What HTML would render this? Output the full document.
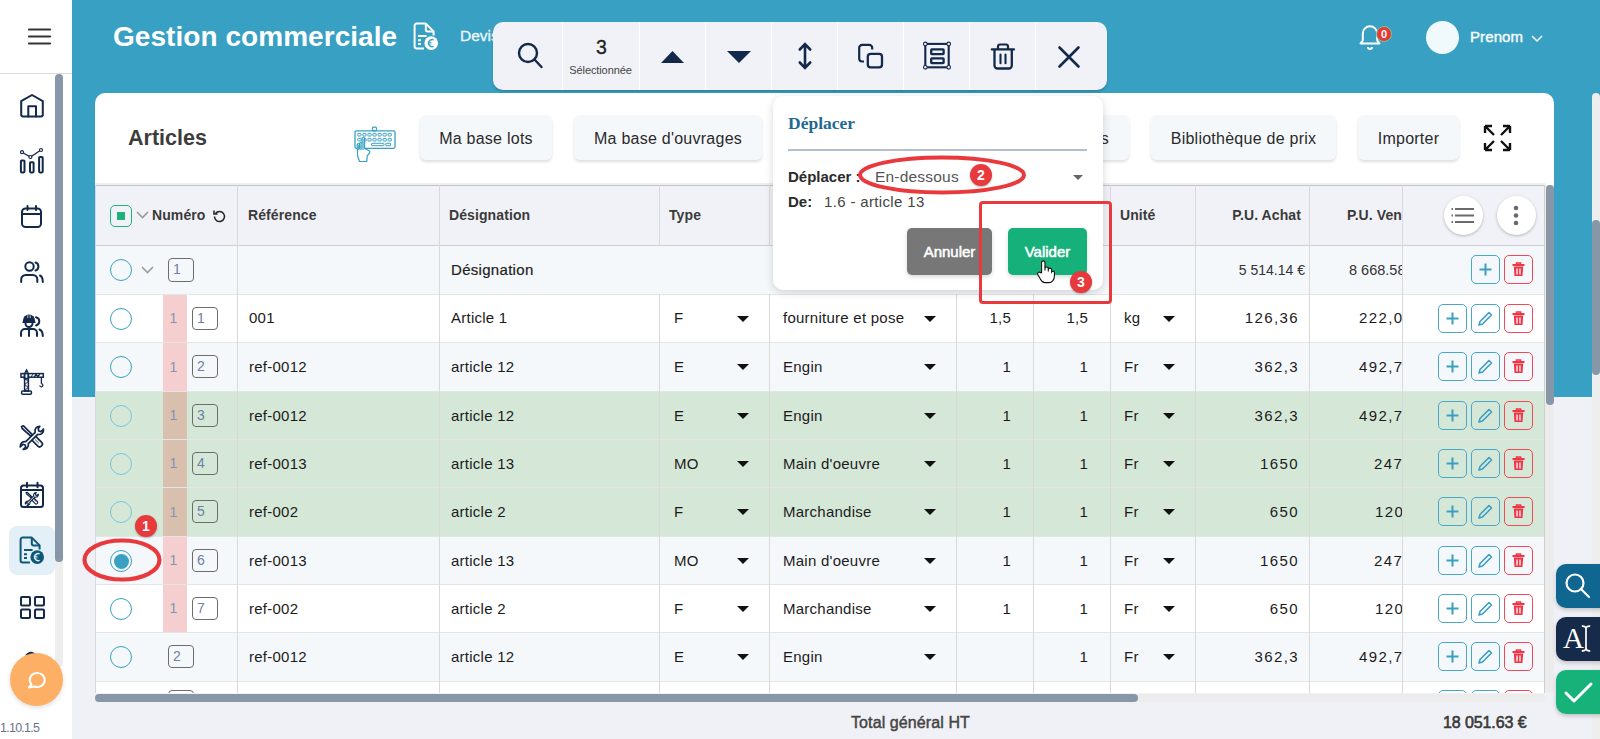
<!DOCTYPE html><html><head><meta charset="utf-8"><title>Gestion commerciale</title><style>
*{box-sizing:border-box;margin:0;padding:0}
html,body{width:1600px;height:739px;overflow:hidden}
body{position:relative;background:#f0f1f6;font-family:"Liberation Sans",sans-serif;color:#1f1f1f}
.a{position:absolute}
svg{display:block;overflow:visible}
.side{left:0;top:0;width:72px;height:739px;background:#fff}
.hdr{left:72px;top:0;width:1528px;height:397px;background:#38a0c2}
.card{left:95px;top:93px;width:1459px;height:646px;background:#fff;border-radius:10px 10px 0 0}
.btn{height:45px;top:115px;background:#f5f8fb;border-radius:6px;box-shadow:0 2px 3px rgba(0,0,0,.13);font-size:16px;color:#2a2a2a;text-align:center;line-height:48px;letter-spacing:.25px}
.th{font-weight:bold;font-size:14px;color:#3a3a3a;top:207px;letter-spacing:.1px;white-space:nowrap}
.vl{width:1px;background:#d9d9d9}
.hl{height:1px;background:#e5e5e5}
.cell{font-size:15px;color:#1b1b1b;letter-spacing:.25px;white-space:nowrap}
.num{letter-spacing:1.4px}
.car{width:0;height:0;border-left:6px solid transparent;border-right:6px solid transparent;border-top:6px solid #111}
.radio{width:22px;height:22px;border-radius:50%;border:1.5px solid #3aa0c2}
.nbox{width:26px;height:23px;border:1.5px solid #6c6c6c;border-radius:4px;font-size:14px;color:#6f80a3;line-height:20px;padding-left:4px}
.bar{width:24px;background:#f5cfcf;font-size:14px;color:#8593b0;text-align:center;padding-right:3px}
.ib{width:29px;height:29px;border:1.5px solid #4aa7c7;border-radius:5px}
.ib.r{border-color:#f04a5a}
.tb{top:22px;height:68px;border-left:1px solid #fff}
</style></head><body><div class="a hdr"></div>
<div class="a" style="left:1592px;top:93px;width:8px;height:646px;background:#eeeeee;border-radius:4px 4px 0 0"></div>
<div class="a" style="left:1592px;top:220px;width:8px;height:155px;background:#8797a8;border-radius:4px"></div>
<div class="a side"></div>
<div class="a" style="left:0;top:73px;width:72px;height:1px;background:#dcdcdc"></div>
<svg class="a" style="left:28px;top:28px" width="23" height="17" viewBox="0 0 23 17" ><path d="M1 1.5H22M1 8.5H22M1 15.5H22" stroke="#333" stroke-width="2.2" stroke-linecap="round"/></svg>
<div class="a" style="left:55px;top:74px;width:8px;height:593px;background:#eeeeee;border-radius:4px"></div>
<div class="a" style="left:55px;top:74px;width:8px;height:488px;background:#8797a8;border-radius:4px"></div>
<div class="a" style="left:9px;top:526px;width:46px;height:49px;background:#e3f0f8;border-radius:8px"></div>
<svg class="a" style="left:20px;top:94px" width="24" height="24" viewBox="0 0 24 24" ><path d="M1.2 7.2L12 1L22.8 7.2V20.5a2 2 0 0 1-2 2H3.2a2 2 0 0 1-2-2Z" fill="none" stroke="#13294b" stroke-width="2" stroke-linecap="round" stroke-linejoin="round" stroke-width="2.2"/><path d="M8.3 22.5V12.2H16V22.5" fill="none" stroke="#13294b" stroke-width="2" stroke-linecap="round" stroke-linejoin="round" stroke-width="2.2" stroke-linejoin="miter"/></svg>
<svg class="a" style="left:20px;top:148px" width="24" height="26" viewBox="0 0 24 26" ><rect x="0.9" y="12.4" width="3.6" height="12" rx="0.8" fill="none" stroke="#13294b" stroke-width="2" stroke-linecap="round" stroke-linejoin="round" stroke-width="1.8"/><rect x="10" y="14.2" width="3.6" height="10.2" rx="0.8" fill="none" stroke="#13294b" stroke-width="2" stroke-linecap="round" stroke-linejoin="round" stroke-width="1.8"/><rect x="19.1" y="9" width="3.6" height="15.4" rx="0.8" fill="none" stroke="#13294b" stroke-width="2" stroke-linecap="round" stroke-linejoin="round" stroke-width="1.8"/><path d="M2 4.2L10.4 9L21 2" fill="none" stroke="#13294b" stroke-width="1.3"/><circle cx="2" cy="4.2" r="1.5" fill="#fff" stroke="#13294b" stroke-width="1.2"/><circle cx="10.4" cy="9" r="1.5" fill="#fff" stroke="#13294b" stroke-width="1.2"/><circle cx="21" cy="2" r="1.5" fill="#fff" stroke="#13294b" stroke-width="1.2"/></svg>
<svg class="a" style="left:21px;top:205px" width="21" height="23" viewBox="0 0 21 23" ><rect x="1" y="3.5" width="19" height="18.5" rx="3.5" fill="none" stroke="#13294b" stroke-width="2" stroke-linecap="round" stroke-linejoin="round" stroke-width="2.1"/><path d="M1 9H20M6.5 1V5M15 1V5" fill="none" stroke="#13294b" stroke-width="2" stroke-linecap="round" stroke-linejoin="round" stroke-width="2.1"/></svg>
<svg class="a" style="left:20px;top:261px" width="24" height="22" viewBox="0 0 24 22" ><circle cx="9.5" cy="5.5" r="4.2" fill="none" stroke="#13294b" stroke-width="2" stroke-linecap="round" stroke-linejoin="round" stroke-width="2.1"/><path d="M1.2 21V18.5a4.5 4.5 0 0 1 4.5-4.5H12.8a4.5 4.5 0 0 1 4.5 4.5V21" fill="none" stroke="#13294b" stroke-width="2" stroke-linecap="round" stroke-linejoin="round" stroke-width="2.1"/><path d="M15.5 1.5a4.2 4.2 0 0 1 0 8" fill="none" stroke="#13294b" stroke-width="2" stroke-linecap="round" stroke-linejoin="round" stroke-width="2.1"/><path d="M20 14.5c1.8 0.8 2.8 3 2.8 6.5" fill="none" stroke="#13294b" stroke-width="2" stroke-linecap="round" stroke-linejoin="round" stroke-width="2.1"/></svg>
<svg class="a" style="left:20px;top:314px" width="24" height="23" viewBox="0 0 24 23" ><path d="M3 8H15V6.5A6 6 0 0 0 3 6.5Z" fill="#13294b"/><path d="M2.5 8.2H15.5" stroke="#13294b" stroke-width="1.6"/><path d="M7.8 1.2V4M10.2 1.2V4" stroke="#fff" stroke-width="0.7"/><path d="M5.5 9.5a3.5 3.5 0 0 0 7 0" fill="none" stroke="#13294b" stroke-width="2" stroke-linecap="round" stroke-linejoin="round" stroke-width="2"/><path d="M1 22V19a4 4 0 0 1 4-4H13a4 4 0 0 1 4 4V22M9 15V22" fill="none" stroke="#13294b" stroke-width="2" stroke-linecap="round" stroke-linejoin="round" stroke-width="2"/><path d="M16 3.2a4.2 4.2 0 0 1 0 8.2" fill="none" stroke="#13294b" stroke-width="2" stroke-linecap="round" stroke-linejoin="round" stroke-width="2"/><path d="M19.5 15.5c2 0.9 3.3 3 3.3 6.5" fill="none" stroke="#13294b" stroke-width="2" stroke-linecap="round" stroke-linejoin="round" stroke-width="2"/></svg>
<svg class="a" style="left:20px;top:368px" width="24" height="27" viewBox="0 0 24 27" ><path d="M6.5 0.4L8.6 4.6H4.4Z" fill="#13294b"/><rect x="1" y="5.6" width="22.3" height="3.6" fill="none" stroke="#13294b" stroke-width="1.5"/><path d="M11 9L13 6M14 9L16 6L18 9L20 6" stroke="#13294b" stroke-width="1"/><rect x="4.6" y="9" width="3.8" height="14.2" fill="none" stroke="#13294b" stroke-width="1.5"/><path d="M4.6 10.5L8.4 13.5L4.6 16.5L8.4 19.5L4.6 22.5" fill="none" stroke="#13294b" stroke-width="1"/><rect x="3.6" y="4.6" width="5.6" height="7" rx="0.8" fill="#13294b"/><rect x="5.5" y="6.3" width="1.8" height="3.4" fill="#fff"/><rect x="1.6" y="23" width="9.8" height="3.2" rx="1" fill="none" stroke="#13294b" stroke-width="1.5"/><path d="M21.4 9V15.8" stroke="#13294b" stroke-width="1.3"/><path d="M21.4 15.6a1.6 1.6 0 1 1-1.7 1.9" fill="none" stroke="#13294b" stroke-width="1.3"/></svg>
<svg class="a" style="left:20px;top:425px" width="24" height="25" viewBox="0 0 24 25" ><path d="M1.5 1.5L3.5 0.8L12.5 9.8L11 11.3L2.2 3.5Z" fill="none" stroke="#13294b" stroke-width="1.7" stroke-linejoin="round"/><rect x="14.3" y="10.3" width="5.4" height="12.5" rx="2.4" transform="rotate(-45 17 16.5)" fill="none" stroke="#13294b" stroke-width="1.7"/><path d="M15.2 14.6L18.8 18.2M16.9 13L20.5 16.6" stroke="#13294b" stroke-width="0.9"/><path d="M19.8 1.3a4.6 4.6 0 0 0-4.6 6L5.8 16.7a4.6 4.6 0 0 0-5.6 5.1L3 19.3L5.2 20L5.7 22.2L3.2 24.3a4.6 4.6 0 0 0 5.1-5.6L17.7 9.3a4.6 4.6 0 0 0 5.8-5.2L20.9 6.6L18.8 6L18.2 3.8Z" fill="#fff" stroke="#13294b" stroke-width="1.7" stroke-linejoin="round"/></svg>
<svg class="a" style="left:20px;top:482px" width="24" height="26" viewBox="0 0 24 26" ><rect x="1" y="3.5" width="22" height="21.5" rx="2.5" fill="none" stroke="#13294b" stroke-width="2" stroke-linecap="round" stroke-linejoin="round" stroke-width="1.4"/><path d="M1 8H23M7 0.8V5.2M17.5 0.8V5.2" fill="none" stroke="#13294b" stroke-width="2" stroke-linecap="round" stroke-linejoin="round" stroke-width="1.4"/><g transform="translate(5.2 9.8) scale(0.56)"><path d="M1.5 1.5L3.5 0.8L12.5 9.8L11 11.3L2.2 3.5Z" fill="none" stroke="#13294b" stroke-width="2.1" stroke-linejoin="round"/><rect x="14.3" y="10.3" width="5.4" height="12.5" rx="2.4" transform="rotate(-45 17 16.5)" fill="none" stroke="#13294b" stroke-width="2.1"/><path d="M15.2 14.6L18.8 18.2M16.9 13L20.5 16.6" stroke="#13294b" stroke-width="0.9"/><path d="M19.8 1.3a4.6 4.6 0 0 0-4.6 6L5.8 16.7a4.6 4.6 0 0 0-5.6 5.1L3 19.3L5.2 20L5.7 22.2L3.2 24.3a4.6 4.6 0 0 0 5.1-5.6L17.7 9.3a4.6 4.6 0 0 0 5.8-5.2L20.9 6.6L18.8 6L18.2 3.8Z" fill="#fff" stroke="#13294b" stroke-width="2.1" stroke-linejoin="round"/></g></svg>
<svg class="a" style="left:20px;top:537px" width="22" height="27" viewBox="0 0 22 27" ><path d="M10 25.4H2.6a2 2 0 0 1-2-2V2.6a2 2 0 0 1 2-2H11.8L19.6 8.4V12.5" fill="none" stroke="#0d5878" stroke-width="2" stroke-linejoin="round"/><path d="M11.8 0.8V6.5a2 2 0 0 0 2 2H19.4" fill="none" stroke="#0d5878" stroke-width="2"/><path d="M4 13H12.6M4 17.2H7M4 21.1H7" stroke="#0d5878" stroke-width="2"/><circle cx="17.2" cy="20.1" r="6.8" fill="#0d5878"/><path d="M19.6 16.8a3.6 3.6 0 1 0 0 6.6" fill="none" stroke="#e3f0f8" stroke-width="1.4"/><path d="M13.8 19.3H17.5M13.8 21H17.5" stroke="#e3f0f8" stroke-width="0.9"/></svg>
<svg class="a" style="left:20px;top:596px" width="25" height="23" viewBox="0 0 25 23" ><rect x="1" y="1" width="9" height="8.5" rx="1" fill="none" stroke="#13294b" stroke-width="2" stroke-linecap="round" stroke-linejoin="round" stroke-width="2.2"/><rect x="15" y="1" width="9" height="8.5" rx="1" fill="none" stroke="#13294b" stroke-width="2" stroke-linecap="round" stroke-linejoin="round" stroke-width="2.2"/><rect x="1" y="13.5" width="9" height="8.5" rx="1" fill="none" stroke="#13294b" stroke-width="2" stroke-linecap="round" stroke-linejoin="round" stroke-width="2.2"/><rect x="15" y="13.5" width="9" height="8.5" rx="1" fill="none" stroke="#13294b" stroke-width="2" stroke-linecap="round" stroke-linejoin="round" stroke-width="2.2"/></svg>
<svg class="a" style="left:25px;top:649px" width="12" height="8" viewBox="0 0 12 8" ><path d="M0 6.5Q6 -1 12 6.5Z" fill="#13294b"/></svg>
<div class="a" style="left:10px;top:653px;width:53px;height:53px;border-radius:50%;background:#fdb065;box-shadow:0 2px 5px rgba(0,0,0,.12)"></div>
<svg class="a" style="left:27px;top:670px" width="19" height="18" viewBox="0 0 19 18" ><path d="M4.5 14.5a7.5 7 0 1 1 3 2L2 17.5Z" fill="none" stroke="#fff" stroke-width="2" stroke-linejoin="round"/></svg>
<div class="a" style="left:0;top:721px;font-size:12.5px;color:#6f7188;letter-spacing:-.75px">1.10.1.5</div>
<div class="a" style="left:113px;top:21px;font-size:28px;font-weight:bold;color:#fff;letter-spacing:.05px">Gestion commerciale</div>
<svg class="a" style="left:414px;top:23px" width="22" height="27" viewBox="0 0 22 27" ><path d="M10 25.4H2.6a2 2 0 0 1-2-2V2.6a2 2 0 0 1 2-2H11.8L19.6 8.4V12.5" fill="none" stroke="#fff" stroke-width="2" stroke-linejoin="round"/><path d="M11.8 0.8V6.5a2 2 0 0 0 2 2H19.4" fill="none" stroke="#fff" stroke-width="2"/><path d="M4 13H12.6M4 17.2H7M4 21.1H7" stroke="#fff" stroke-width="2"/><circle cx="17.2" cy="20.1" r="6.8" fill="#fff"/><path d="M19.6 16.8a3.6 3.6 0 1 0 0 6.6" fill="none" stroke="#38a0c2" stroke-width="1.4"/><path d="M13.8 19.3H17.5M13.8 21H17.5" stroke="#38a0c2" stroke-width="0.9"/></svg>
<div class="a" style="left:460px;top:27px;font-size:15.5px;letter-spacing:0px;color:#eef8fc;-webkit-text-stroke:.3px #eef8fc">Devis</div>
<svg class="a" style="left:1359px;top:24px" width="23" height="26" viewBox="0 0 23 26" ><path d="M1.5 19.5H20.5L18.2 16.5V9.5a7.2 7.2 0 0 0-14.4 0V16.5Z" fill="none" stroke="#fff" stroke-width="2" stroke-linejoin="round"/><path d="M9 23a2 2 0 0 0 4 0" fill="none" stroke="#fff" stroke-width="2"/></svg>
<div class="a" style="left:1376px;top:26px;width:16px;height:16px;border-radius:50%;background:#e53935;border:1px solid #7cc49a;color:#fff;font-size:11px;font-weight:bold;text-align:center;line-height:14px">0</div>
<div class="a" style="left:1426px;top:21px;width:33px;height:33px;border-radius:50%;background:#f0fafd"></div>
<div class="a" style="left:1470px;top:28px;font-size:15px;letter-spacing:.1px;color:#f4fbfd;-webkit-text-stroke:.45px #f4fbfd">Prenom</div>
<svg class="a" style="left:1531px;top:35px" width="12" height="7" viewBox="0 0 12 7" ><path d="M1 1L6 6L11 1" fill="none" stroke="#fff" stroke-width="1.5"/></svg>
<div class="a card"></div>
<div class="a" style="left:128px;top:126px;font-size:21.5px;font-weight:bold;color:#3c3c3c">Articles</div>
<svg class="a" style="left:354px;top:126px" width="42" height="37" viewBox="0 0 42 37" ><rect x="1" y="4.8" width="40" height="17.5" rx="1.5" fill="none" stroke="#3aa0c2" stroke-width="1.3"/><rect x="18.5" y="1.2" width="4" height="3.6" rx="1" fill="none" stroke="#3aa0c2" stroke-width="1.2"/><rect x="3.8" y="7.4" width="3.2" height="2.6" rx="0.5" fill="none" stroke="#3aa0c2" stroke-width="1"/><rect x="8.85" y="7.4" width="3.2" height="2.6" rx="0.5" fill="none" stroke="#3aa0c2" stroke-width="1"/><rect x="13.899999999999999" y="7.4" width="3.2" height="2.6" rx="0.5" fill="none" stroke="#3aa0c2" stroke-width="1"/><rect x="18.95" y="7.4" width="3.2" height="2.6" rx="0.5" fill="none" stroke="#3aa0c2" stroke-width="1"/><rect x="24.0" y="7.4" width="3.2" height="2.6" rx="0.5" fill="none" stroke="#3aa0c2" stroke-width="1"/><rect x="29.05" y="7.4" width="3.2" height="2.6" rx="0.5" fill="none" stroke="#3aa0c2" stroke-width="1"/><rect x="34.099999999999994" y="7.4" width="3.2" height="2.6" rx="0.5" fill="none" stroke="#3aa0c2" stroke-width="1"/><rect x="3.8" y="12.4" width="3.2" height="2.6" rx="0.5" fill="none" stroke="#3aa0c2" stroke-width="1"/><rect x="8.85" y="12.4" width="3.2" height="2.6" rx="0.5" fill="none" stroke="#3aa0c2" stroke-width="1"/><rect x="13.899999999999999" y="12.4" width="3.2" height="2.6" rx="0.5" fill="none" stroke="#3aa0c2" stroke-width="1"/><rect x="18.95" y="12.4" width="3.2" height="2.6" rx="0.5" fill="none" stroke="#3aa0c2" stroke-width="1"/><rect x="24.0" y="12.4" width="3.2" height="2.6" rx="0.5" fill="none" stroke="#3aa0c2" stroke-width="1"/><rect x="29.05" y="12.4" width="3.2" height="2.6" rx="0.5" fill="none" stroke="#3aa0c2" stroke-width="1"/><rect x="34.099999999999994" y="12.4" width="3.2" height="2.6" rx="0.5" fill="none" stroke="#3aa0c2" stroke-width="1"/><rect x="17.5" y="17.3" width="12.5" height="2.4" rx="0.5" fill="none" stroke="#3aa0c2" stroke-width="1"/><rect x="31.8" y="17.3" width="4.8" height="2.4" rx="0.5" fill="none" stroke="#3aa0c2" stroke-width="1"/><path d="M5.5 35.5L3.6 30L3.2 18.8a1.2 1.2 0 0 1 2.4 0V23V17.8a1.2 1.2 0 0 1 2.4 0V23V12.6a1.3 1.3 0 0 1 2.6 0V22.5L15.2 24.8a1.5 1.5 0 0 1 0.3 2.2L13.2 29.8L12.8 35.5Z" fill="#fff" stroke="#3aa0c2" stroke-width="1.2" stroke-linejoin="round"/><path d="M4.4 19V24M6.8 18.2V24M9.2 13V24" stroke="#3aa0c2" stroke-width="0.9"/></svg>
<div class="a btn" style="left:420px;width:132px">Ma base lots</div>
<div class="a btn" style="left:574px;width:188px">Ma base d'ouvrages</div>
<div class="a btn" style="left:1151px;width:185px">Bibliothèque de prix</div>
<div class="a btn" style="left:1358px;width:101px">Importer</div>
<div class="a btn" style="left:784px;width:345px;text-align:right;padding-right:20px">Ma base d'articles</div>
<svg class="a" style="left:1483px;top:124px" width="29" height="28" viewBox="0 0 29 28" ><path d="M2 2L11 11M2 2V9M2 2H9M27 2L18 11M27 2V9M27 2H20M2 26L11 17M2 26V19M2 26H9M27 26L18 17M27 26V19M27 26H20" fill="none" stroke="#111" stroke-width="2.4"/></svg>
<div class="a" style="left:95px;top:183px;width:1450px;height:2px;background:#eeeeee"></div>
<div class="a" style="left:95px;top:185px;width:1450px;height:61px;background:#f1f2f7;border-top:1.5px solid #c4c4c8;border-bottom:1.5px solid #cfcfd3"></div>
<div class="a" style="left:95px;top:246px;width:1450px;height:48px;background:#f5f8fb"></div>
<div class="a" style="left:95px;top:294px;width:1450px;height:48px;background:#ffffff"></div>
<div class="a hl" style="left:95px;top:294px;width:1450px"></div>
<div class="a" style="left:95px;top:342px;width:1450px;height:49px;background:#f5f8fb"></div>
<div class="a hl" style="left:95px;top:342px;width:1450px"></div>
<div class="a" style="left:95px;top:391px;width:1450px;height:48px;background:#d5e8d8"></div>
<div class="a hl" style="left:95px;top:391px;width:1450px"></div>
<div class="a" style="left:95px;top:439px;width:1450px;height:48px;background:#d5e8d8"></div>
<div class="a hl" style="left:95px;top:439px;width:1450px"></div>
<div class="a" style="left:95px;top:487px;width:1450px;height:49px;background:#d5e8d8"></div>
<div class="a hl" style="left:95px;top:487px;width:1450px"></div>
<div class="a" style="left:95px;top:536px;width:1450px;height:48px;background:#f5f8fb"></div>
<div class="a hl" style="left:95px;top:536px;width:1450px"></div>
<div class="a" style="left:95px;top:584px;width:1450px;height:48px;background:#ffffff"></div>
<div class="a hl" style="left:95px;top:584px;width:1450px"></div>
<div class="a" style="left:95px;top:632px;width:1450px;height:49px;background:#f5f8fb"></div>
<div class="a hl" style="left:95px;top:632px;width:1450px"></div>
<div class="a" style="left:95px;top:681px;width:1450px;height:49px;background:#ffffff"></div>
<div class="a hl" style="left:95px;top:681px;width:1450px"></div>
<div class="a vl" style="left:237px;top:185px;height:60px"></div>
<div class="a vl" style="left:237px;top:245px;height:449px"></div>
<div class="a vl" style="left:439px;top:185px;height:60px"></div>
<div class="a vl" style="left:439px;top:245px;height:449px"></div>
<div class="a vl" style="left:659px;top:185px;height:60px"></div>
<div class="a vl" style="left:659px;top:294px;height:400px"></div>
<div class="a vl" style="left:769px;top:185px;height:60px"></div>
<div class="a vl" style="left:769px;top:294px;height:400px"></div>
<div class="a vl" style="left:956px;top:185px;height:60px"></div>
<div class="a vl" style="left:956px;top:294px;height:400px"></div>
<div class="a vl" style="left:1033px;top:185px;height:60px"></div>
<div class="a vl" style="left:1033px;top:294px;height:400px"></div>
<div class="a vl" style="left:1110px;top:185px;height:60px"></div>
<div class="a vl" style="left:1110px;top:294px;height:400px"></div>
<div class="a vl" style="left:1195px;top:185px;height:60px"></div>
<div class="a vl" style="left:1195px;top:245px;height:449px"></div>
<div class="a vl" style="left:1309px;top:185px;height:60px"></div>
<div class="a vl" style="left:1309px;top:245px;height:449px"></div>
<div class="a vl" style="left:1402px;top:185px;height:60px"></div>
<div class="a vl" style="left:1402px;top:245px;height:449px"></div>
<div class="a vl" style="left:95px;top:185px;height:509px;background:#d9d9d9"></div>
<div class="a vl" style="left:1544px;top:185px;height:509px;background:#cfcfcf"></div>
<div class="a" style="left:110px;top:205px;width:22px;height:22px;border:1.5px solid #22b07d;border-radius:5px"></div>
<div class="a" style="left:117px;top:212px;width:8px;height:8px;background:#20b07a"></div>
<svg class="a" style="left:136px;top:211px" width="13" height="8" viewBox="0 0 13 8" ><path d="M1 1L6.5 6.5L12 1" fill="none" stroke="#9a9a9a" stroke-width="1.6"/></svg>
<div class="a th" style="left:152px">Numéro</div>
<svg class="a" style="left:213px;top:209px" width="13" height="13" viewBox="0 0 13 13" ><path d="M2.5 4.5A5 5 0 1 1 1.5 7.5" fill="none" stroke="#222" stroke-width="1.5"/><path d="M1 1.5V5H4.5" fill="none" stroke="#222" stroke-width="1.5"/></svg>
<div class="a th" style="left:248px">Référence</div>
<div class="a th" style="left:449px">Désignation</div>
<div class="a th" style="left:669px">Type</div>
<div class="a th" style="left:1120px">Unité</div>
<div class="a th" style="left:1195px;width:106px;text-align:right">P.U. Achat</div>
<div class="a" style="left:1309px;top:185px;width:93px;height:60px;overflow:hidden"><div class="a th" style="left:38px;top:22px">P.U. Vente</div></div>
<div class="a" style="left:1444px;top:196px;width:39px;height:39px;border-radius:50%;background:#fff;box-shadow:0 1px 3px rgba(0,0,0,.25)"></div>
<svg class="a" style="left:1450px;top:207px" width="26" height="17" viewBox="0 0 26 17" ><path d="M5 2H24M5 8.5H24M5 15H24" stroke="#6a6a6a" stroke-width="2"/><path d="M1.5 2H3M1.5 8.5H3M1.5 15H3" stroke="#6a6a6a" stroke-width="2"/></svg>
<div class="a" style="left:1497px;top:196px;width:39px;height:39px;border-radius:50%;background:#fff;box-shadow:0 1px 3px rgba(0,0,0,.25)"></div>
<svg class="a" style="left:1512px;top:205px" width="8" height="21" viewBox="0 0 8 21" ><circle cx="4" cy="3" r="2.3" fill="#6a6a6a"/><circle cx="4" cy="10.5" r="2.3" fill="#6a6a6a"/><circle cx="4" cy="18" r="2.3" fill="#6a6a6a"/></svg>
<div class="a radio" style="left:110px;top:259px;border-color:#3aa0c2"></div>
<svg class="a" style="left:141px;top:266px" width="13" height="8" viewBox="0 0 13 8" ><path d="M1 1L6.5 6.5L12 1" fill="none" stroke="#9a9a9a" stroke-width="1.6"/></svg>
<div class="a nbox" style="left:168px;top:258px;height:24px;line-height:21px">1</div>
<div class="a cell" style="left:451px;top:261px;color:#222;font-size:15px;letter-spacing:.3px;-webkit-text-stroke:.2px #222">Désignation</div>
<div class="a cell" style="left:1195px;top:262px;width:110px;text-align:right;font-size:14px;color:#333;letter-spacing:0">5 514.14 €</div>
<div class="a" style="left:1309px;top:245px;width:93px;height:49px;overflow:hidden"><div class="a cell" style="left:40px;top:17px;font-size:14.5px;color:#333;letter-spacing:0">8 668.58 €</div></div>
<div class="a ib" style="left:1471px;top:255px"></div><svg class="a" style="left:1479px;top:263px" width="13" height="13" viewBox="0 0 13 13" ><path d="M6.5 0.5V12.5M0.5 6.5H12.5" stroke="#3a9fc0" stroke-width="2"/></svg>
<div class="a ib r" style="left:1504px;top:255px"></div><svg class="a" style="left:1512px;top:262px" width="13" height="15" viewBox="0 0 13 15" ><path d="M4.5 2V1h4v1" fill="none" stroke="#f03646" stroke-width="1.6"/><path d="M0.5 3H12.5" stroke="#f03646" stroke-width="2"/><path d="M1.8 4.5H11.2L10.5 14H2.5Z" fill="#f03646"/><path d="M5 6.5V12.5M8 6.5V12.5" stroke="#fff" stroke-width="1.3"/></svg>
<div class="a radio" style="left:110px;top:308px;border-color:#3aa0c2"></div>
<div class="a bar" style="left:163px;top:295px;height:47px;line-height:47px">1</div>
<div class="a nbox" style="left:192px;top:307px">1</div>
<div class="a cell" style="left:249px;top:309px">001</div>
<div class="a cell" style="left:451px;top:309px">Article 1</div>
<div class="a cell" style="left:674px;top:309px">F</div>
<div class="a car" style="left:737px;top:316px"></div>
<div class="a cell" style="left:783px;top:309px">fourniture et pose</div>
<div class="a car" style="left:924px;top:316px"></div>
<div class="a cell" style="left:956px;top:309px;width:55px;text-align:right">1,5</div>
<div class="a cell" style="left:1033px;top:309px;width:55px;text-align:right">1,5</div>
<div class="a cell" style="left:1124px;top:309px">kg</div>
<div class="a car" style="left:1163px;top:316px"></div>
<div class="a cell num" style="left:1195px;top:309px;width:104px;text-align:right">126,36</div>
<div class="a" style="left:1309px;top:295px;width:93px;height:47px;overflow:hidden"><div class="a cell num" style="left:50px;top:14px">222,04</div></div>
<div class="a ib" style="left:1438px;top:304px"></div><svg class="a" style="left:1446px;top:312px" width="13" height="13" viewBox="0 0 13 13" ><path d="M6.5 0.5V12.5M0.5 6.5H12.5" stroke="#3a9fc0" stroke-width="2"/></svg>
<div class="a ib" style="left:1471px;top:304px"></div><svg class="a" style="left:1478px;top:311px" width="15" height="15" viewBox="0 0 15 15" ><path d="M11 1.5L13.5 4L4.5 13L1 14L2 10.5Z" fill="none" stroke="#3a9fc0" stroke-width="1.6" stroke-linejoin="round"/></svg>
<div class="a ib r" style="left:1504px;top:304px"></div><svg class="a" style="left:1512px;top:311px" width="13" height="15" viewBox="0 0 13 15" ><path d="M4.5 2V1h4v1" fill="none" stroke="#f03646" stroke-width="1.6"/><path d="M0.5 3H12.5" stroke="#f03646" stroke-width="2"/><path d="M1.8 4.5H11.2L10.5 14H2.5Z" fill="#f03646"/><path d="M5 6.5V12.5M8 6.5V12.5" stroke="#fff" stroke-width="1.3"/></svg>
<div class="a radio" style="left:110px;top:356px;border-color:#3aa0c2"></div>
<div class="a bar" style="left:163px;top:343px;height:48px;line-height:48px">1</div>
<div class="a nbox" style="left:192px;top:355px">2</div>
<div class="a cell" style="left:249px;top:358px">ref-0012</div>
<div class="a cell" style="left:451px;top:358px">article 12</div>
<div class="a cell" style="left:674px;top:358px">E</div>
<div class="a car" style="left:737px;top:364px"></div>
<div class="a cell" style="left:783px;top:358px">Engin</div>
<div class="a car" style="left:924px;top:364px"></div>
<div class="a cell" style="left:956px;top:358px;width:55px;text-align:right">1</div>
<div class="a cell" style="left:1033px;top:358px;width:55px;text-align:right">1</div>
<div class="a cell" style="left:1124px;top:358px">Fr</div>
<div class="a car" style="left:1163px;top:364px"></div>
<div class="a cell num" style="left:1195px;top:358px;width:104px;text-align:right">362,3</div>
<div class="a" style="left:1309px;top:343px;width:93px;height:48px;overflow:hidden"><div class="a cell num" style="left:50px;top:15px">492,75</div></div>
<div class="a ib" style="left:1438px;top:352px"></div><svg class="a" style="left:1446px;top:360px" width="13" height="13" viewBox="0 0 13 13" ><path d="M6.5 0.5V12.5M0.5 6.5H12.5" stroke="#3a9fc0" stroke-width="2"/></svg>
<div class="a ib" style="left:1471px;top:352px"></div><svg class="a" style="left:1478px;top:359px" width="15" height="15" viewBox="0 0 15 15" ><path d="M11 1.5L13.5 4L4.5 13L1 14L2 10.5Z" fill="none" stroke="#3a9fc0" stroke-width="1.6" stroke-linejoin="round"/></svg>
<div class="a ib r" style="left:1504px;top:352px"></div><svg class="a" style="left:1512px;top:359px" width="13" height="15" viewBox="0 0 13 15" ><path d="M4.5 2V1h4v1" fill="none" stroke="#f03646" stroke-width="1.6"/><path d="M0.5 3H12.5" stroke="#f03646" stroke-width="2"/><path d="M1.8 4.5H11.2L10.5 14H2.5Z" fill="#f03646"/><path d="M5 6.5V12.5M8 6.5V12.5" stroke="#fff" stroke-width="1.3"/></svg>
<div class="a radio" style="left:110px;top:405px;border-color:#7fc3d8"></div>
<div class="a bar" style="left:163px;top:392px;height:47px;line-height:47px">1</div>
<div class="a" style="left:163px;top:392px;width:24px;height:47px;background:#d9bfad"></div><div class="a" style="left:163px;top:392px;width:24px;text-align:center;font-size:14px;color:#8593b0;padding-right:3px;line-height:47px">1</div>
<div class="a nbox" style="left:192px;top:404px">3</div>
<div class="a cell" style="left:249px;top:407px">ref-0012</div>
<div class="a cell" style="left:451px;top:407px">article 12</div>
<div class="a cell" style="left:674px;top:407px">E</div>
<div class="a car" style="left:737px;top:413px"></div>
<div class="a cell" style="left:783px;top:407px">Engin</div>
<div class="a car" style="left:924px;top:413px"></div>
<div class="a cell" style="left:956px;top:407px;width:55px;text-align:right">1</div>
<div class="a cell" style="left:1033px;top:407px;width:55px;text-align:right">1</div>
<div class="a cell" style="left:1124px;top:407px">Fr</div>
<div class="a car" style="left:1163px;top:413px"></div>
<div class="a cell num" style="left:1195px;top:407px;width:104px;text-align:right">362,3</div>
<div class="a" style="left:1309px;top:392px;width:93px;height:47px;overflow:hidden"><div class="a cell num" style="left:50px;top:15px">492,75</div></div>
<div class="a ib" style="left:1438px;top:401px"></div><svg class="a" style="left:1446px;top:409px" width="13" height="13" viewBox="0 0 13 13" ><path d="M6.5 0.5V12.5M0.5 6.5H12.5" stroke="#3a9fc0" stroke-width="2"/></svg>
<div class="a ib" style="left:1471px;top:401px"></div><svg class="a" style="left:1478px;top:408px" width="15" height="15" viewBox="0 0 15 15" ><path d="M11 1.5L13.5 4L4.5 13L1 14L2 10.5Z" fill="none" stroke="#3a9fc0" stroke-width="1.6" stroke-linejoin="round"/></svg>
<div class="a ib r" style="left:1504px;top:401px"></div><svg class="a" style="left:1512px;top:408px" width="13" height="15" viewBox="0 0 13 15" ><path d="M4.5 2V1h4v1" fill="none" stroke="#f03646" stroke-width="1.6"/><path d="M0.5 3H12.5" stroke="#f03646" stroke-width="2"/><path d="M1.8 4.5H11.2L10.5 14H2.5Z" fill="#f03646"/><path d="M5 6.5V12.5M8 6.5V12.5" stroke="#fff" stroke-width="1.3"/></svg>
<div class="a radio" style="left:110px;top:453px;border-color:#7fc3d8"></div>
<div class="a bar" style="left:163px;top:440px;height:47px;line-height:47px">1</div>
<div class="a" style="left:163px;top:440px;width:24px;height:47px;background:#d9bfad"></div><div class="a" style="left:163px;top:440px;width:24px;text-align:center;font-size:14px;color:#8593b0;padding-right:3px;line-height:47px">1</div>
<div class="a nbox" style="left:192px;top:452px">4</div>
<div class="a cell" style="left:249px;top:455px">ref-0013</div>
<div class="a cell" style="left:451px;top:455px">article 13</div>
<div class="a cell" style="left:674px;top:455px">MO</div>
<div class="a car" style="left:737px;top:461px"></div>
<div class="a cell" style="left:783px;top:455px">Main d'oeuvre</div>
<div class="a car" style="left:924px;top:461px"></div>
<div class="a cell" style="left:956px;top:455px;width:55px;text-align:right">1</div>
<div class="a cell" style="left:1033px;top:455px;width:55px;text-align:right">1</div>
<div class="a cell" style="left:1124px;top:455px">Fr</div>
<div class="a car" style="left:1163px;top:461px"></div>
<div class="a cell num" style="left:1195px;top:455px;width:104px;text-align:right">1650</div>
<div class="a" style="left:1309px;top:440px;width:93px;height:47px;overflow:hidden"><div class="a cell num" style="left:65px;top:15px">2475</div></div>
<div class="a ib" style="left:1438px;top:449px"></div><svg class="a" style="left:1446px;top:457px" width="13" height="13" viewBox="0 0 13 13" ><path d="M6.5 0.5V12.5M0.5 6.5H12.5" stroke="#3a9fc0" stroke-width="2"/></svg>
<div class="a ib" style="left:1471px;top:449px"></div><svg class="a" style="left:1478px;top:456px" width="15" height="15" viewBox="0 0 15 15" ><path d="M11 1.5L13.5 4L4.5 13L1 14L2 10.5Z" fill="none" stroke="#3a9fc0" stroke-width="1.6" stroke-linejoin="round"/></svg>
<div class="a ib r" style="left:1504px;top:449px"></div><svg class="a" style="left:1512px;top:456px" width="13" height="15" viewBox="0 0 13 15" ><path d="M4.5 2V1h4v1" fill="none" stroke="#f03646" stroke-width="1.6"/><path d="M0.5 3H12.5" stroke="#f03646" stroke-width="2"/><path d="M1.8 4.5H11.2L10.5 14H2.5Z" fill="#f03646"/><path d="M5 6.5V12.5M8 6.5V12.5" stroke="#fff" stroke-width="1.3"/></svg>
<div class="a radio" style="left:110px;top:501px;border-color:#7fc3d8"></div>
<div class="a bar" style="left:163px;top:488px;height:48px;line-height:48px">1</div>
<div class="a" style="left:163px;top:488px;width:24px;height:48px;background:#d9bfad"></div><div class="a" style="left:163px;top:488px;width:24px;text-align:center;font-size:14px;color:#8593b0;padding-right:3px;line-height:48px">1</div>
<div class="a nbox" style="left:192px;top:500px">5</div>
<div class="a cell" style="left:249px;top:503px">ref-002</div>
<div class="a cell" style="left:451px;top:503px">article 2</div>
<div class="a cell" style="left:674px;top:503px">F</div>
<div class="a car" style="left:737px;top:509px"></div>
<div class="a cell" style="left:783px;top:503px">Marchandise</div>
<div class="a car" style="left:924px;top:509px"></div>
<div class="a cell" style="left:956px;top:503px;width:55px;text-align:right">1</div>
<div class="a cell" style="left:1033px;top:503px;width:55px;text-align:right">1</div>
<div class="a cell" style="left:1124px;top:503px">Fr</div>
<div class="a car" style="left:1163px;top:509px"></div>
<div class="a cell num" style="left:1195px;top:503px;width:104px;text-align:right">650</div>
<div class="a" style="left:1309px;top:488px;width:93px;height:48px;overflow:hidden"><div class="a cell num" style="left:66px;top:15px">1200</div></div>
<div class="a ib" style="left:1438px;top:497px"></div><svg class="a" style="left:1446px;top:505px" width="13" height="13" viewBox="0 0 13 13" ><path d="M6.5 0.5V12.5M0.5 6.5H12.5" stroke="#3a9fc0" stroke-width="2"/></svg>
<div class="a ib" style="left:1471px;top:497px"></div><svg class="a" style="left:1478px;top:504px" width="15" height="15" viewBox="0 0 15 15" ><path d="M11 1.5L13.5 4L4.5 13L1 14L2 10.5Z" fill="none" stroke="#3a9fc0" stroke-width="1.6" stroke-linejoin="round"/></svg>
<div class="a ib r" style="left:1504px;top:497px"></div><svg class="a" style="left:1512px;top:504px" width="13" height="15" viewBox="0 0 13 15" ><path d="M4.5 2V1h4v1" fill="none" stroke="#f03646" stroke-width="1.6"/><path d="M0.5 3H12.5" stroke="#f03646" stroke-width="2"/><path d="M1.8 4.5H11.2L10.5 14H2.5Z" fill="#f03646"/><path d="M5 6.5V12.5M8 6.5V12.5" stroke="#fff" stroke-width="1.3"/></svg>
<div class="a radio" style="left:110px;top:550px;border-color:#3aa0c2"></div><div class="a" style="left:113.5px;top:553.5px;width:15px;height:15px;border-radius:50%;background:#3aa0c2"></div>
<div class="a bar" style="left:163px;top:537px;height:47px;line-height:47px">1</div>
<div class="a nbox" style="left:192px;top:549px">6</div>
<div class="a cell" style="left:249px;top:552px">ref-0013</div>
<div class="a cell" style="left:451px;top:552px">article 13</div>
<div class="a cell" style="left:674px;top:552px">MO</div>
<div class="a car" style="left:737px;top:558px"></div>
<div class="a cell" style="left:783px;top:552px">Main d'oeuvre</div>
<div class="a car" style="left:924px;top:558px"></div>
<div class="a cell" style="left:956px;top:552px;width:55px;text-align:right">1</div>
<div class="a cell" style="left:1033px;top:552px;width:55px;text-align:right">1</div>
<div class="a cell" style="left:1124px;top:552px">Fr</div>
<div class="a car" style="left:1163px;top:558px"></div>
<div class="a cell num" style="left:1195px;top:552px;width:104px;text-align:right">1650</div>
<div class="a" style="left:1309px;top:537px;width:93px;height:47px;overflow:hidden"><div class="a cell num" style="left:65px;top:15px">2475</div></div>
<div class="a ib" style="left:1438px;top:546px"></div><svg class="a" style="left:1446px;top:554px" width="13" height="13" viewBox="0 0 13 13" ><path d="M6.5 0.5V12.5M0.5 6.5H12.5" stroke="#3a9fc0" stroke-width="2"/></svg>
<div class="a ib" style="left:1471px;top:546px"></div><svg class="a" style="left:1478px;top:553px" width="15" height="15" viewBox="0 0 15 15" ><path d="M11 1.5L13.5 4L4.5 13L1 14L2 10.5Z" fill="none" stroke="#3a9fc0" stroke-width="1.6" stroke-linejoin="round"/></svg>
<div class="a ib r" style="left:1504px;top:546px"></div><svg class="a" style="left:1512px;top:553px" width="13" height="15" viewBox="0 0 13 15" ><path d="M4.5 2V1h4v1" fill="none" stroke="#f03646" stroke-width="1.6"/><path d="M0.5 3H12.5" stroke="#f03646" stroke-width="2"/><path d="M1.8 4.5H11.2L10.5 14H2.5Z" fill="#f03646"/><path d="M5 6.5V12.5M8 6.5V12.5" stroke="#fff" stroke-width="1.3"/></svg>
<div class="a radio" style="left:110px;top:598px;border-color:#3aa0c2"></div>
<div class="a bar" style="left:163px;top:585px;height:47px;line-height:47px">1</div>
<div class="a nbox" style="left:192px;top:597px">7</div>
<div class="a cell" style="left:249px;top:600px">ref-002</div>
<div class="a cell" style="left:451px;top:600px">article 2</div>
<div class="a cell" style="left:674px;top:600px">F</div>
<div class="a car" style="left:737px;top:606px"></div>
<div class="a cell" style="left:783px;top:600px">Marchandise</div>
<div class="a car" style="left:924px;top:606px"></div>
<div class="a cell" style="left:956px;top:600px;width:55px;text-align:right">1</div>
<div class="a cell" style="left:1033px;top:600px;width:55px;text-align:right">1</div>
<div class="a cell" style="left:1124px;top:600px">Fr</div>
<div class="a car" style="left:1163px;top:606px"></div>
<div class="a cell num" style="left:1195px;top:600px;width:104px;text-align:right">650</div>
<div class="a" style="left:1309px;top:585px;width:93px;height:47px;overflow:hidden"><div class="a cell num" style="left:66px;top:15px">1200</div></div>
<div class="a ib" style="left:1438px;top:594px"></div><svg class="a" style="left:1446px;top:602px" width="13" height="13" viewBox="0 0 13 13" ><path d="M6.5 0.5V12.5M0.5 6.5H12.5" stroke="#3a9fc0" stroke-width="2"/></svg>
<div class="a ib" style="left:1471px;top:594px"></div><svg class="a" style="left:1478px;top:601px" width="15" height="15" viewBox="0 0 15 15" ><path d="M11 1.5L13.5 4L4.5 13L1 14L2 10.5Z" fill="none" stroke="#3a9fc0" stroke-width="1.6" stroke-linejoin="round"/></svg>
<div class="a ib r" style="left:1504px;top:594px"></div><svg class="a" style="left:1512px;top:601px" width="13" height="15" viewBox="0 0 13 15" ><path d="M4.5 2V1h4v1" fill="none" stroke="#f03646" stroke-width="1.6"/><path d="M0.5 3H12.5" stroke="#f03646" stroke-width="2"/><path d="M1.8 4.5H11.2L10.5 14H2.5Z" fill="#f03646"/><path d="M5 6.5V12.5M8 6.5V12.5" stroke="#fff" stroke-width="1.3"/></svg>
<div class="a radio" style="left:110px;top:646px;border-color:#3aa0c2"></div>
<div class="a nbox" style="left:168px;top:645px">2</div>
<div class="a cell" style="left:249px;top:648px">ref-0012</div>
<div class="a cell" style="left:451px;top:648px">article 12</div>
<div class="a cell" style="left:674px;top:648px">E</div>
<div class="a car" style="left:737px;top:654px"></div>
<div class="a cell" style="left:783px;top:648px">Engin</div>
<div class="a car" style="left:924px;top:654px"></div>
<div class="a cell" style="left:1033px;top:648px;width:55px;text-align:right">1</div>
<div class="a cell" style="left:1124px;top:648px">Fr</div>
<div class="a car" style="left:1163px;top:654px"></div>
<div class="a cell num" style="left:1195px;top:648px;width:104px;text-align:right">362,3</div>
<div class="a" style="left:1309px;top:633px;width:93px;height:48px;overflow:hidden"><div class="a cell num" style="left:50px;top:15px">492,75</div></div>
<div class="a ib" style="left:1438px;top:642px"></div><svg class="a" style="left:1446px;top:650px" width="13" height="13" viewBox="0 0 13 13" ><path d="M6.5 0.5V12.5M0.5 6.5H12.5" stroke="#3a9fc0" stroke-width="2"/></svg>
<div class="a ib" style="left:1471px;top:642px"></div><svg class="a" style="left:1478px;top:649px" width="15" height="15" viewBox="0 0 15 15" ><path d="M11 1.5L13.5 4L4.5 13L1 14L2 10.5Z" fill="none" stroke="#3a9fc0" stroke-width="1.6" stroke-linejoin="round"/></svg>
<div class="a ib r" style="left:1504px;top:642px"></div><svg class="a" style="left:1512px;top:649px" width="13" height="15" viewBox="0 0 13 15" ><path d="M4.5 2V1h4v1" fill="none" stroke="#f03646" stroke-width="1.6"/><path d="M0.5 3H12.5" stroke="#f03646" stroke-width="2"/><path d="M1.8 4.5H11.2L10.5 14H2.5Z" fill="#f03646"/><path d="M5 6.5V12.5M8 6.5V12.5" stroke="#fff" stroke-width="1.3"/></svg>
<div class="a nbox" style="left:168px;top:690px"></div>
<div class="a ib" style="left:1438px;top:690px"></div>
<div class="a ib" style="left:1471px;top:690px"></div>
<div class="a ib r" style="left:1504px;top:690px"></div>
<div class="a" style="left:95px;top:693px;width:1459px;height:46px;background:#f0f1f6"></div>
<div class="a" style="left:95px;top:694px;width:1450px;height:8px;background:#ececec;border-radius:4px"></div>
<div class="a" style="left:95px;top:694px;width:1043px;height:8px;background:#8797a8;border-radius:4px"></div>
<div class="a" style="left:1545px;top:185px;width:9px;height:508px;background:#ececec"></div>
<div class="a" style="left:1546px;top:185px;width:8px;height:220px;background:#8797a8;border-radius:4px"></div>
<div class="a" style="left:851px;top:714px;font-size:16px;color:#454545;-webkit-text-stroke:.45px #454545;letter-spacing:.1px">Total général HT</div>
<div class="a" style="left:1443px;top:714px;font-size:16px;color:#3a3a3a;-webkit-text-stroke:.6px #3a3a3a;letter-spacing:-.1px">18 051.63 €</div>
<div class="a" style="left:1556px;top:564px;width:50px;height:44px;background:#0e6691;border-radius:10px 0 0 10px;box-shadow:0 2px 4px rgba(0,0,0,.2)"></div>
<svg class="a" style="left:1564px;top:572px" width="28" height="28" viewBox="0 0 28 28" ><circle cx="11" cy="11" r="8.5" fill="none" stroke="#fff" stroke-width="2.2"/><path d="M17 17L25 25" stroke="#fff" stroke-width="2.2" stroke-linecap="round"/></svg>
<div class="a" style="left:1556px;top:617px;width:50px;height:44px;background:#162a4a;border-radius:10px 0 0 10px;box-shadow:0 2px 4px rgba(0,0,0,.2)"></div>
<div class="a" style="left:1563px;top:623px;font-family:'Liberation Serif',serif;font-size:29px;color:#fff;line-height:30px;letter-spacing:-1px">A</div>
<svg class="a" style="left:1581px;top:625px" width="10" height="27" viewBox="0 0 10 27" ><path d="M0.8 1.2Q5 0.8 5 4V23Q5 26.2 0.8 25.8M9.2 1.2Q5 0.8 5 4M9.2 25.8Q5 26.2 5 23" fill="none" stroke="#fff" stroke-width="1.7"/></svg>
<div class="a" style="left:1556px;top:670px;width:50px;height:44px;background:#17b27a;border-radius:10px 0 0 10px;box-shadow:0 2px 4px rgba(0,0,0,.2)"></div>
<svg class="a" style="left:1564px;top:682px" width="30" height="22" viewBox="0 0 30 22" ><path d="M2 11L10 19L27 2" fill="none" stroke="#fff" stroke-width="3" stroke-linecap="round" stroke-linejoin="round"/></svg>
<div class="a" style="left:493px;top:22px;width:614px;height:68px;background:#f1f2f8;border-radius:10px;box-shadow:0 2px 2px rgba(0,0,0,.15)"></div>
<div class="a" style="left:562px;top:22px;width:1px;height:68px;background:#fff"></div>
<div class="a" style="left:639px;top:22px;width:1px;height:68px;background:#fff"></div>
<div class="a" style="left:705px;top:22px;width:1px;height:68px;background:#fff"></div>
<div class="a" style="left:771px;top:22px;width:1px;height:68px;background:#fff"></div>
<div class="a" style="left:837px;top:22px;width:1px;height:68px;background:#fff"></div>
<div class="a" style="left:903px;top:22px;width:1px;height:68px;background:#fff"></div>
<div class="a" style="left:969px;top:22px;width:1px;height:68px;background:#fff"></div>
<div class="a" style="left:1035px;top:22px;width:1px;height:68px;background:#fff"></div>
<svg class="a" style="left:517px;top:42px" width="26" height="27" viewBox="0 0 26 27" ><circle cx="11" cy="11" r="9" fill="none" stroke="#13294b" stroke-width="2.4"/><path d="M17.5 17.5L24.5 25" stroke="#13294b" stroke-width="2.4" stroke-linecap="round"/></svg>
<div class="a" style="left:563px;top:36px;width:77px;text-align:center;font-size:19.5px;color:#222;-webkit-text-stroke:.3px #222">3</div>
<div class="a" style="left:562px;top:64px;width:77px;text-align:center;font-size:11px;color:#444;letter-spacing:-.1px">Sélectionnée</div>
<svg class="a" style="left:661px;top:51px" width="23" height="12" viewBox="0 0 23 12" ><path d="M11.5 0L23 12H0Z" fill="#13294b"/></svg>
<svg class="a" style="left:727px;top:51px" width="24" height="12" viewBox="0 0 24 12" ><path d="M0 0H24L12 12Z" fill="#13294b"/></svg>
<svg class="a" style="left:798px;top:42px" width="13" height="28" viewBox="0 0 13 28" ><path d="M7 2.5V25.5M1.8 7.5L7 2.2L12.2 7.5M1.8 20.5L7 25.8L12.2 20.5" fill="none" stroke="#13294b" stroke-width="2.6" stroke-linecap="round" stroke-linejoin="miter"/></svg>
<svg class="a" style="left:858px;top:43px" width="26" height="26" viewBox="0 0 26 26" ><path d="M6 18.5H4.2a3 3 0 0 1-3-3V4.8a3 3 0 0 1 3-3H11.2a3 3 0 0 1 3 3V6.5" fill="none" stroke="#13294b" stroke-width="2.2"/><rect x="9.8" y="10.8" width="14.2" height="13.6" rx="2.8" fill="none" stroke="#13294b" stroke-width="2.3"/></svg>
<svg class="a" style="left:923px;top:42px" width="28" height="28" viewBox="0 0 28 28" ><rect x="2.3" y="1.9" width="23.4" height="23.4" fill="none" stroke="#13294b" stroke-width="2.1"/><rect x="8.2" y="7.4" width="12.4" height="4.8" rx="0.6" fill="none" stroke="#13294b" stroke-width="2.3"/><rect x="8.2" y="16.3" width="12.4" height="4.8" rx="0.6" fill="none" stroke="#13294b" stroke-width="2.3"/><circle cx="2.3" cy="1.9" r="1.8" fill="#f1f2f8" stroke="#13294b" stroke-width="1.1"/><circle cx="25.7" cy="1.9" r="1.8" fill="#f1f2f8" stroke="#13294b" stroke-width="1.1"/><circle cx="2.3" cy="25.3" r="1.8" fill="#f1f2f8" stroke="#13294b" stroke-width="1.1"/><circle cx="25.7" cy="25.3" r="1.8" fill="#f1f2f8" stroke="#13294b" stroke-width="1.1"/></svg>
<svg class="a" style="left:991px;top:43px" width="24" height="27" viewBox="0 0 24 27" ><path d="M0.8 6.4H23" stroke="#13294b" stroke-width="2.2" stroke-linecap="round"/><path d="M7 6V3.5a2 2 0 0 1 2-2H15a2 2 0 0 1 2 2V6" fill="none" stroke="#13294b" stroke-width="2.2"/><path d="M3.5 6.5V22.5a3 3 0 0 0 3 3H17.8a3 3 0 0 0 3-3V6.5" fill="none" stroke="#13294b" stroke-width="2.3"/><path d="M9.5 11.5V20.3M14.5 11.5V20.3" stroke="#13294b" stroke-width="2.1" stroke-linecap="round"/></svg>
<svg class="a" style="left:1058px;top:46px" width="22" height="22" viewBox="0 0 22 22" ><path d="M1.5 1.5L20.5 20.5M20.5 1.5L1.5 20.5" stroke="#13294b" stroke-width="2.6" stroke-linecap="round"/></svg>
<div class="a" style="left:773px;top:96px;width:330px;height:194px;background:#fff;border-radius:10px;box-shadow:0 2px 9px rgba(0,0,0,.16)"></div>
<div class="a" style="left:788px;top:113px;font-family:'Liberation Serif',serif;font-weight:bold;font-size:17.5px;color:#1f6a92">Déplacer</div>
<div class="a" style="left:788px;top:149px;width:299px;height:2px;background:#b3c0cb"></div>
<div class="a" style="left:788px;top:168px;font-size:15px;font-weight:bold;color:#2a2a2a">Déplacer :</div>
<div class="a" style="left:875px;top:168px;font-size:15.5px;color:#555;letter-spacing:.2px">En-dessous</div>
<div class="a car" style="left:1073px;top:175px;border-top-color:#666;border-left-width:5px;border-right-width:5px;border-top-width:5px"></div>
<div class="a" style="left:788px;top:193px;font-size:15px;font-weight:bold;color:#2a2a2a">De:</div>
<div class="a" style="left:824px;top:193px;font-size:15px;color:#444;letter-spacing:.35px">1.6 - article 13</div>
<div class="a" style="left:907px;top:228px;width:85px;height:47px;background:#777;border-radius:5px;box-shadow:0 2px 4px rgba(0,0,0,.15);color:#fff;font-size:15px;-webkit-text-stroke:.5px #fff;text-align:center;line-height:47px">Annuler</div>
<div class="a" style="left:1008px;top:228px;width:79px;height:47px;background:#16b07a;border-radius:5px;box-shadow:0 2px 4px rgba(0,0,0,.15);color:#fff;font-size:15px;-webkit-text-stroke:.5px #fff;text-align:center;line-height:47px">Valider</div>
<svg class="a" style="left:82px;top:538px" width="80" height="44" viewBox="0 0 80 44" ><ellipse cx="40" cy="22" rx="37.5" ry="19.5" fill="none" stroke="#e8393d" stroke-width="4.2"/></svg>
<svg class="a" style="left:857px;top:155px" width="170" height="40" viewBox="0 0 170 40" ><ellipse cx="85" cy="20" rx="82" ry="17.5" fill="none" stroke="#e8393d" stroke-width="4"/></svg>
<div class="a" style="left:979px;top:201px;width:133px;height:103px;border:3.5px solid #e8393d;border-radius:4px"></div>
<div class="a" style="left:135px;top:515px;width:22px;height:22px;border-radius:50%;background:#e8393d;color:#fff;font-weight:bold;font-size:14px;text-align:center;line-height:22px;box-shadow:0 1px 2px rgba(0,0,0,.3)">1</div>
<div class="a" style="left:970px;top:164px;width:22px;height:22px;border-radius:50%;background:#e8393d;color:#fff;font-weight:bold;font-size:14px;text-align:center;line-height:22px;box-shadow:0 1px 2px rgba(0,0,0,.3)">2</div>
<div class="a" style="left:1070px;top:271px;width:22px;height:22px;border-radius:50%;background:#e8393d;color:#fff;font-weight:bold;font-size:14px;text-align:center;line-height:22px;box-shadow:0 1px 2px rgba(0,0,0,.3)">3</div>
<svg class="a" style="left:1036px;top:259px" width="19" height="25" viewBox="0 0 17 22" ><path d="M5 12V3a1.5 1.5 0 0 1 3 0V10V8.5a1.5 1.5 0 0 1 3 0V11V9.5a1.5 1.5 0 0 1 3 0V11.5a1.5 1.5 0 0 1 2.5 0V15c0 3-2 6-5 6H8c-2 0-3-1-4-3L1.5 13.5a1.5 1.5 0 0 1 2.5-1.5Z" fill="#fff" stroke="#111" stroke-width="1"/></svg></body></html>
